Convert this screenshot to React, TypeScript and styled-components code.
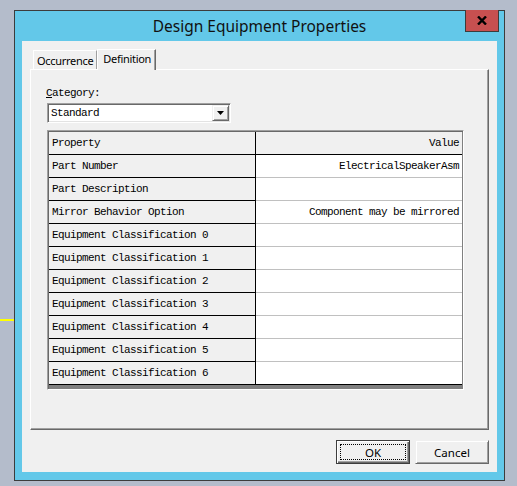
import React from "react";
import styled, { createGlobalStyle } from "styled-components";

const GlobalStyle = createGlobalStyle`
  html, body {
    margin: 0;
    padding: 0;
    background: #b4bccb;
  }
  body {
    font-family: "Noto Sans", "Liberation Sans", sans-serif;
  }
  * {
    box-sizing: border-box;
  }
`;

const Desktop = styled.div`
  display: flex;
  width: 517px;
  height: 486px;
  padding-top: 10px;
  background: #b4bccb;
  overflow: hidden;
`;

const Gutter = styled.div`
  width: 14px;
  flex-shrink: 0;
`;

const GuideLine = styled.div`
  margin-top: 309px;
  width: 14px;
  height: 2px;
  background: #ffff00;
`;

const Window = styled.div`
  width: 491px;
  height: 471px;
  border: 1px solid #3c3c3c;
  background: #63c8e9;
  display: flex;
  flex-direction: column;
  padding: 0 7px 8px 7px;
`;

const TitleBar = styled.div`
  height: 30px;
  display: grid;
  grid-template-columns: 1fr auto 1fr;
  align-items: start;
`;

const Title = styled.div`
  grid-column: 2;
  font-size: 15.5px;
  line-height: 30px;
  color: #111;
  white-space: nowrap;
`;

const CloseButton = styled.div`
  grid-column: 3;
  justify-self: end;
  width: 34px;
  height: 22px;
  margin-top: -1px;
  margin-right: -2px;
  background: #c75050;
  border: 1px solid #3c3c3c;
  border-top: none;
  display: flex;
  align-items: center;
  justify-content: center;
`;

const Client = styled.div`
  flex: 1;
  background: #f0f0f0;
  display: flex;
  flex-direction: column;
  padding: 0 8px 8px 8px;
`;

const TabRow = styled.div`
  height: 28px;
  display: flex;
  align-items: flex-end;
  padding-left: 3px;
  position: relative;
  z-index: 1;
`;

const Tab = styled.div<{ active?: boolean }>`
  font-size: 11px;
  letter-spacing: -0.3px;
  color: #000;
  background: #f0f0f0;
  border-top: 1px solid #ffffff;
  border-left: 1px solid #ffffff;
  border-right: 1px solid ${({ active }) => (active ? "#696969" : "#a0a0a0")};
  box-shadow: ${({ active }) => (active ? "inset -1px 0 #a0a0a0" : "none")};
  height: ${({ active }) => (active ? "21px" : "19px")};
  margin-bottom: ${({ active }) => (active ? "-1px" : "0")};
  padding: ${({ active }) => (active ? "0 4px 3px 5px" : "0 3px 0 3px")};
  line-height: ${({ active }) => (active ? "17px" : "19px")};
  white-space: nowrap;
`;

const Panel = styled.div`
  flex: 1;
  border-top: 1px solid #ffffff;
  border-left: 1px solid #ffffff;
  border-right: 1px solid #696969;
  border-bottom: 1px solid #696969;
  box-shadow: inset -1px -1px #a0a0a0;
  padding: 17px 0 0 15px;
  display: flex;
  flex-direction: column;
  align-items: flex-start;
`;

const Label = styled.div`
  font-family: "Liberation Mono", monospace;
  font-size: 11px;
  letter-spacing: -0.6px;
  line-height: 13px;
  color: #000;

  u {
    text-decoration: underline;
  }
`;

const Combo = styled.div`
  margin: 3px 0 0 1px;
  width: 184px;
  height: 20px;
  background: #ffffff;
  border-top: 1px solid #a0a0a0;
  border-left: 1px solid #a0a0a0;
  border-right: 1px solid #ffffff;
  border-bottom: 1px solid #ffffff;
  box-shadow: inset 1px 1px #696969, inset -1px -1px #e3e3e3;
  padding: 1px;
  display: flex;
  align-items: stretch;
`;

const ComboText = styled.div`
  flex: 1;
  font-family: "Liberation Mono", monospace;
  font-size: 11px;
  letter-spacing: -0.6px;
  line-height: 16px;
  padding-left: 2px;
  color: #000;
`;

const DropButton = styled.div`
  width: 17px;
  background: #f0f0f0;
  border-top: 1px solid #f0f0f0;
  border-left: 1px solid #f0f0f0;
  border-right: 1px solid #696969;
  border-bottom: 1px solid #696969;
  box-shadow: inset 1px 1px #ffffff, inset -1px -1px #a0a0a0;
  display: flex;
  align-items: center;
  justify-content: center;
`;

const Table = styled.div`
  margin: 7px 0 0 1px;
  width: 417px;
  border-top: 1px solid #a0a0a0;
  border-left: 1px solid #a0a0a0;
  border-right: 1px solid #ffffff;
  border-bottom: 1px solid #ffffff;
  background: #808080;
  padding-bottom: 4px;
  box-shadow: inset 1px 1px #696969;
`;

const Grid = styled.div`
  margin: 1px 1px 0 1px;
  display: grid;
  grid-template-columns: 207px 206px;
  border-right: 1px solid #e3e3e3;
`;

const Cell = styled.div<{ value?: boolean; header?: boolean; last?: boolean }>`
  height: 23px;
  font-family: "Liberation Mono", monospace;
  font-size: 11px;
  letter-spacing: -0.6px;
  line-height: 22px;
  color: #000;
  white-space: nowrap;
  overflow: hidden;
  background: ${({ value, header }) => (value && !header ? "#ffffff" : "#f0f0f0")};
  border-right: ${({ value }) => (value ? "none" : "1px solid #000")};
  border-bottom: 1px solid
    ${({ value, header, last }) => (value && !header && !last ? "#c0c0c0" : "#000")};
  text-align: ${({ value }) => (value ? "right" : "left")};
  padding: ${({ value }) => (value ? "0 3px 0 0" : "0 0 0 3px")};
`;

const ButtonRow = styled.div`
  margin-top: 10px;
  display: flex;
  justify-content: flex-end;
  gap: 5px;
`;

const Button = styled.div<{ primary?: boolean }>`
  width: 74px;
  height: 24px;
  font-size: 11.5px;
  color: #000;
  background: #f0f0f0;
  display: flex;
  align-items: center;
  justify-content: center;
  position: relative;
  border: 1px solid ${({ primary }) => (primary ? "#3c3c3c" : "#f0f0f0")};
  border-right-color: ${({ primary }) => (primary ? "#3c3c3c" : "#696969")};
  border-bottom-color: ${({ primary }) => (primary ? "#3c3c3c" : "#696969")};
  box-shadow: ${({ primary }) =>
    primary
      ? "inset 1px 1px #ffffff, inset -1px -1px #696969, inset -2px -2px #a0a0a0"
      : "inset 1px 1px #ffffff, inset -1px -1px #a0a0a0"};
`;

const FocusRing = styled.span`
  position: absolute;
  inset: 3px;
  border: 1px dotted #000;
`;

const rows: [string, string][] = [
  ["Part Number", "ElectricalSpeakerAsm"],
  ["Part Description", ""],
  ["Mirror Behavior Option", "Component may be mirrored"],
  ...Array.from({ length: 7 }, (_, i) => [`Equipment Classification ${i}`, ""] as [string, string]),
];

const CloseGlyph = () => (
  <svg width="10" height="9" viewBox="0 0 10 9">
    <path d="M1 0.5 L9 8.5 M9 0.5 L1 8.5" stroke="#000" strokeWidth="2.4" />
  </svg>
);

const DownArrow = () => (
  <svg width="7" height="4" viewBox="0 0 7 4">
    <path d="M0 0 H7 L3.5 4 Z" fill="#000" />
  </svg>
);

export default function App() {
  return (
    <>
      <GlobalStyle />
      <Desktop>
        <Gutter>
          <GuideLine />
        </Gutter>
        <Window>
          <TitleBar>
            <Title>Design Equipment Properties</Title>
            <CloseButton>
              <CloseGlyph />
            </CloseButton>
          </TitleBar>
          <Client>
            <TabRow>
              <Tab>Occurrence</Tab>
              <Tab active>Definition</Tab>
            </TabRow>
            <Panel>
              <Label>
                <u>C</u>ategory:
              </Label>
              <Combo>
                <ComboText>Standard</ComboText>
                <DropButton>
                  <DownArrow />
                </DropButton>
              </Combo>
              <Table>
                <Grid>
                  <Cell header>Property</Cell>
                  <Cell header value>
                    Value
                  </Cell>
                  {rows.map(([name, val], i) => (
                    <React.Fragment key={name}>
                      <Cell last={i === rows.length - 1}>{name}</Cell>
                      <Cell value last={i === rows.length - 1}>
                        {val}
                      </Cell>
                    </React.Fragment>
                  ))}
                </Grid>
              </Table>
            </Panel>
            <ButtonRow>
              <Button primary>
                <FocusRing />
                OK
              </Button>
              <Button>Cancel</Button>
            </ButtonRow>
          </Client>
        </Window>
      </Desktop>
    </>
  );
}
